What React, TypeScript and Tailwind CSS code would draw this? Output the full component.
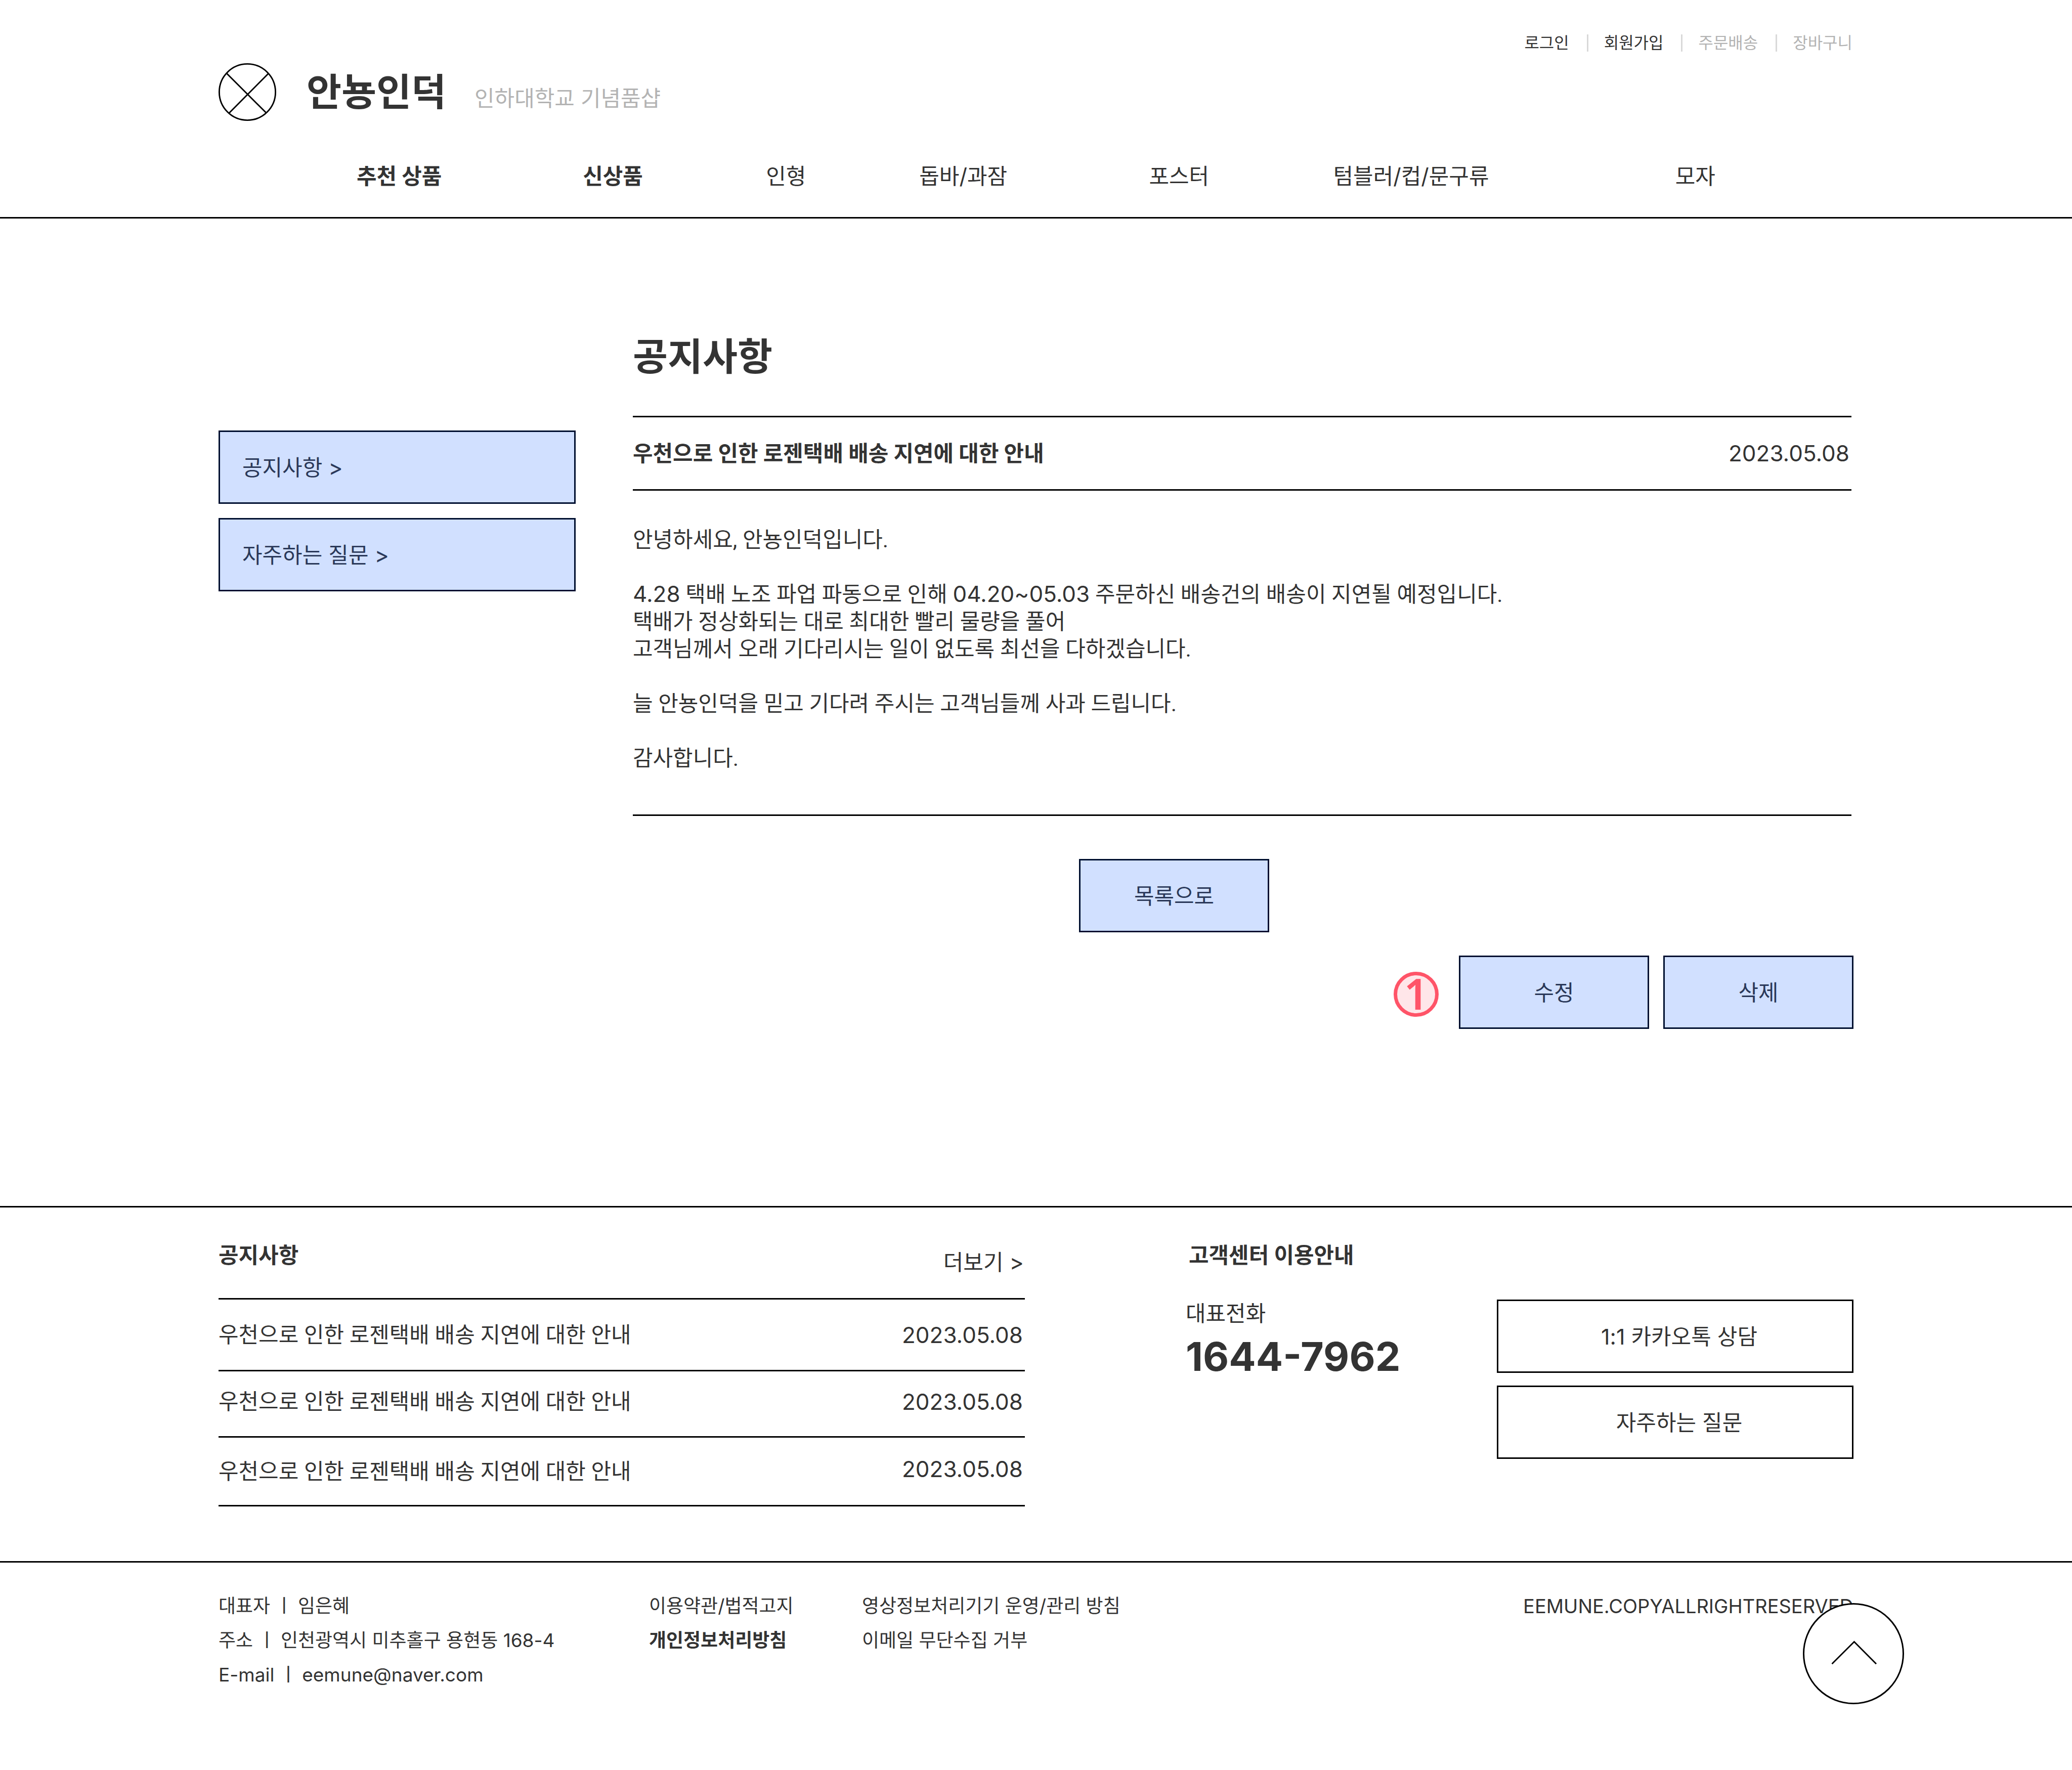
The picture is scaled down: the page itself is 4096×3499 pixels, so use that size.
import type { ReactNode } from "react";

const utilityLinks = [
  { label: "로그인", muted: false },
  { label: "회원가입", muted: false },
  { label: "주문배송", muted: true },
  { label: "장바구니", muted: true },
];

const categories = [
  { label: "추천 상품", strong: true },
  { label: "신상품", strong: true },
  { label: "인형", strong: false },
  { label: "돕바/과잠", strong: false },
  { label: "포스터", strong: false },
  { label: "텀블러/컵/문구류", strong: false },
  { label: "모자", strong: false },
];

const notices = [
  { row: "h-[142px]", title: "", date: "" },
  { row: "h-[131px]", title: "pb-2", date: "pb-2" },
  { row: "h-[136px]", title: "", date: "pb-[10px]" },
];

const noticeTitle = "우천으로 인한 로젠택배 배송 지연에 대한 안내";
const noticeDate = "2023.05.08";

function Latin({ children }: { children: ReactNode }) {
  return <span className="font-['Inter',sans-serif] text-[44px] leading-none">{children}</span>;
}

function BlueButton({ children, className }: { children: ReactNode; className: string }) {
  return (
    <button
      type="button"
      className={`flex h-[145px] items-center border-3 border-[#001030] bg-[#d1e0ff] text-[#2a3858] ${className}`}
    >
      {children}
    </button>
  );
}

function Header() {
  return (
    <header className="border-b-3 border-black">
      <div className="px-[432px] pt-[68px]">
        <ul className="flex h-[34px] items-center justify-end gap-[35px] pr-[2px] text-[32px] leading-[34px]">
          {utilityLinks.map((link, i) => (
            <li key={link.label} className="flex items-center gap-[31px]">
              {i > 0 && <span className="h-[34px] w-[3px] bg-[#d9d9d9]" />}
              <a href="#" className={link.muted ? "text-[#b3b3b3]" : ""}>
                {link.label}
              </a>
            </li>
          ))}
        </ul>
        <div className="mt-[23px] flex h-[114px] items-center">
          <svg viewBox="0 0 160 160" className="size-[114px]" fill="none" stroke="#000" strokeWidth="4" aria-hidden="true">
            <circle cx="80" cy="80" r="78" />
            <path d="M22.5 28 132.5 138M138.5 28.5 29 138.5" />
          </svg>
          <a href="#" className="ml-[60px] text-[75px] leading-[90px] font-bold">
            안뇽인덕
          </a>
          <p className="mt-6 ml-14 text-[#b3b3b3]">인하대학교 기념품샵</p>
        </div>
      </div>
      <nav className="mt-[82px] grid grid-cols-[447fr_362fr_303fr_454fr_364fr_676fr_784fr] pb-[54px] pl-[705px]">
        {categories.map((c) => (
          <a key={c.label} href="#" className={c.strong ? "font-bold" : ""}>
            {c.label}
          </a>
        ))}
      </nav>
    </header>
  );
}

function NoticeArticle() {
  return (
    <main className="grid grid-cols-[706fr_2413fr] gap-[113px] px-[432px] pt-[228px] pb-[350px]">
      <aside className="flex flex-col gap-7 pt-[191px]">
        <BlueButton className="pl-11">공지사항 &gt;</BlueButton>
        <BlueButton className="pl-11">자주하는 질문 &gt;</BlueButton>
      </aside>
      <section>
        <h1 className="text-[75px] leading-[90px] font-bold">공지사항</h1>
        <div className="mt-[72px] mr-1 flex h-[148px] items-center justify-between border-y-3 border-black">
          <h2 className="font-bold">{noticeTitle}</h2>
          <time className="pr-1">
            <Latin>{noticeDate}</Latin>
          </time>
        </div>
        <div className="mr-1 border-b-3 border-black pt-[70px] pb-[84px] font-['Roboto','Noto_Sans_CJK_KR',sans-serif]">
          <p>안녕하세요, 안뇽인덕입니다.</p>
          <p className="mt-[54px]">
            <Latin>4.28</Latin> 택배 노조 파업 파동으로 인해 <Latin>04.20~05.03</Latin> 주문하신 배송건의 배송이 지연될
            예정입니다.
            <br />
            택배가 정상화되는 대로 최대한 빨리 물량을 풀어
            <br />
            고객님께서 오래 기다리시는 일이 없도록 최선을 다하겠습니다.
          </p>
          <p className="mt-[54px]">늘 안뇽인덕을 믿고 기다려 주시는 고객님들께 사과 드립니다.</p>
          <p className="mt-[54px]">감사합니다.</p>
        </div>
        <div className="mt-[85px] pl-[882px]">
          <BlueButton className="w-[376px] justify-center">목록으로</BlueButton>
        </div>
        <div className="mt-[46px] flex items-center justify-end gap-7">
          <span className="mt-2 mr-3 flex size-[89px] items-center justify-center rounded-full border-7 border-[#ff5468] bg-[#ffe6e9] pb-1 font-['Noto_Sans',sans-serif] text-[84px] leading-[71px] font-semibold text-[#ff5468]">
            1
          </span>
          <BlueButton className="w-[376px] justify-center">수정</BlueButton>
          <BlueButton className="w-[376px] justify-center">삭제</BlueButton>
        </div>
      </section>
    </main>
  );
}

function SupportBand() {
  return (
    <section className="grid grid-cols-[1594fr_1320fr] gap-[318px] border-t-3 border-black px-[432px] pt-[67px] pb-[108px]">
      <div>
        <div className="flex h-[112px] items-start justify-between">
          <h2 className="font-bold">공지사항</h2>
          <a href="#" className="pt-[14px] pr-[2px]">
            더보기 &gt;
          </a>
        </div>
        <ul className="border-t-3 border-black">
          {notices.map((n) => (
            <li key={n.row} className={`flex items-center justify-between border-b-3 border-black ${n.row}`}>
              <a href="#" className={`font-['Roboto','Noto_Sans_CJK_KR',sans-serif] ${n.title}`}>
                {noticeTitle}
              </a>
              <time className={`pr-1 ${n.date}`}>
                <Latin>{noticeDate}</Latin>
              </time>
            </li>
          ))}
        </ul>
      </div>
      <div>
        <h2 className="h-[115px] pl-[6px] font-bold">고객센터 이용안내</h2>
        <div className="flex items-start justify-between">
          <div>
            <p>대표전화</p>
            <p className="mt-[18px] font-['Inter',sans-serif] text-[79px] leading-[80px] font-bold">1644-7962</p>
          </div>
          <div className="flex w-[705px] flex-col gap-[25px]">
            <button type="button" className="h-[145px] border-3 border-black pl-4">
              1:1 카카오톡 상담
            </button>
            <button type="button" className="h-[145px] border-3 border-black pl-4">
              자주하는 질문
            </button>
          </div>
        </div>
      </div>
    </section>
  );
}

function Footer() {
  return (
    <footer className="relative grow border-t-3 border-black px-[432px] pt-[52px]">
      <div className="grid grid-cols-[851fr_421fr_1960fr] text-[37px] leading-[68px]">
        <address className="not-italic">
          <p>대표자 ㅣ 임은혜</p>
          <p>주소 ㅣ 인천광역시 미추홀구 용현동 168-4</p>
          <p>E-mail ㅣ eemune@naver.com</p>
        </address>
        <ul>
          <li>
            <a href="#">이용약관/법적고지</a>
          </li>
          <li>
            <a href="#" className="font-bold">
              개인정보처리방침
            </a>
          </li>
        </ul>
        <div className="flex items-start justify-between">
          <ul>
            <li>
              <a href="#">영상정보처리기기 운영/관리 방침</a>
            </li>
            <li>
              <a href="#">이메일 무단수집 거부</a>
            </li>
          </ul>
          <p className="text-[38px]">EEMUNE.COPYALLRIGHTRESERVED</p>
        </div>
      </div>
      <button type="button" aria-label="맨 위로" className="absolute top-[80px] right-[332px] size-[200px] rounded-full border-3 border-black bg-white">
        <svg viewBox="0 0 280 280" className="-m-[3px] size-[200px]" fill="none" stroke="#000" strokeWidth="4" aria-hidden="true">
          <path d="M80.5 168.5 142 107 203 168.5" />
        </svg>
      </button>
    </footer>
  );
}

export default function App() {
  return (
    <div className="flex min-h-screen flex-col bg-white font-['Inter','Noto_Sans_CJK_KR',sans-serif] text-[43px] leading-[54px] text-[#333]">
      <Header />
      <NoticeArticle />
      <SupportBand />
      <Footer />
    </div>
  );
}
